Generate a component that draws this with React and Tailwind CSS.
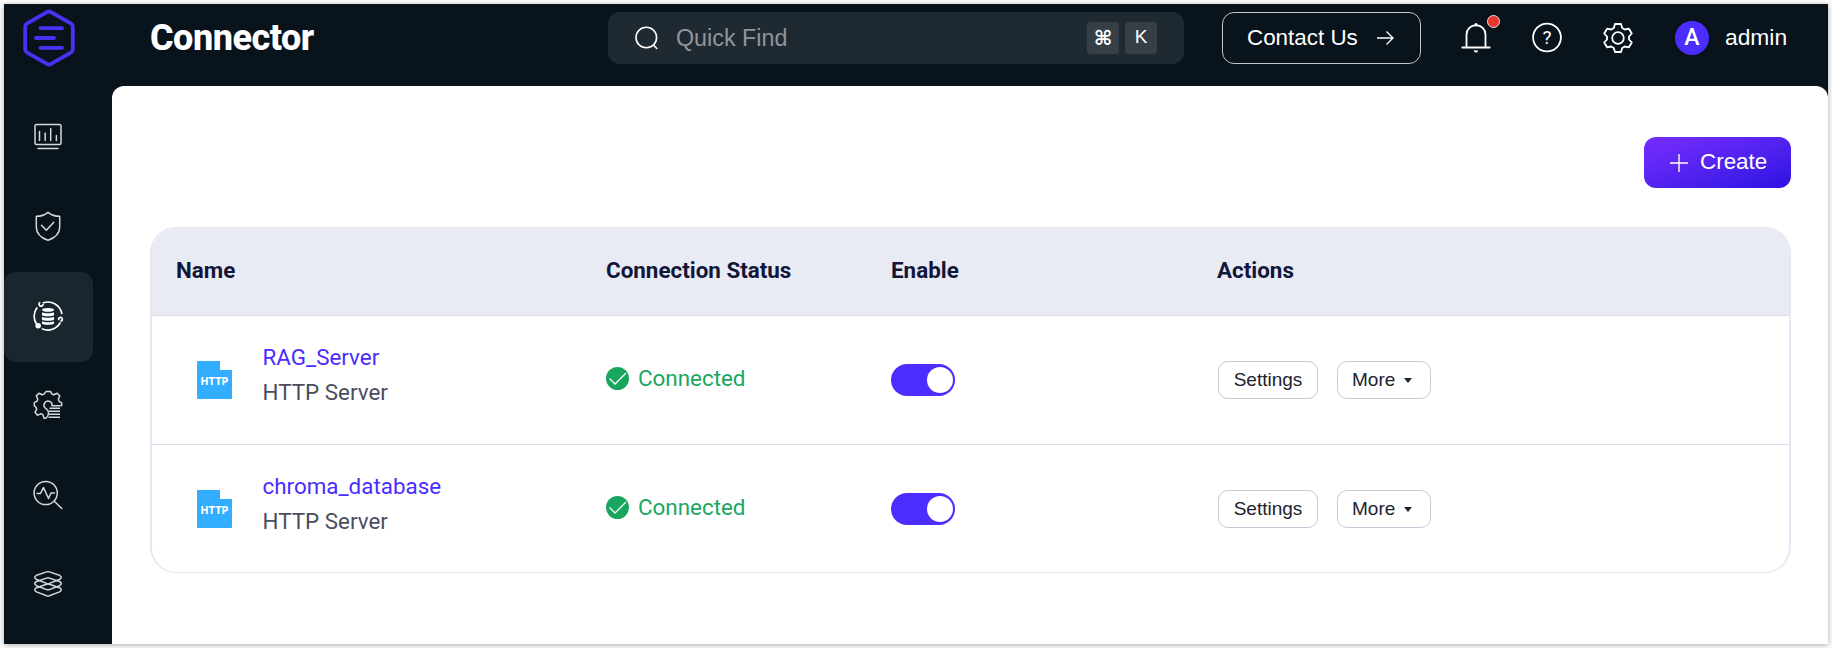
const ink = 'stroke-[#d4d9dc]';

function Logo() {
  return (
    <svg className="h-[58px] w-[52px]" viewBox="0 0 52 58" fill="none" stroke="#4a32f5" strokeWidth="3.8" strokeLinecap="round" strokeLinejoin="round">
      <path d="M24 3.100 4.200 14.300a4 4 0 0 0-2 3.400v22.600a4 4 0 0 0 2 3.400L24 54.900a4 4 0 0 0 4 0l19.800-11.200a4 4 0 0 0 2-3.400V17.700a4 4 0 0 0-2-3.400L28 3.100a4 4 0 0 0-4 0Z" />
      <path d="M17.500 19.200h21.500M13 29h18M17.500 38.800h21.500" />
    </svg>
  );
}

function MonitorIcon() {
  return (
    <svg className={`size-[30px] ${ink}`} viewBox="0 0 30 30" fill="none" strokeWidth="1.5" strokeLinecap="round">
      <rect x="2" y="2.500" width="26" height="20" rx="1.500" />
      <path d="M6.500 9.500v9M12.200 11v7.500M17.700 6.500v12M23.400 13.500v5M5 26.500h20" />
    </svg>
  );
}

function ShieldIcon() {
  return (
    <svg className={`size-[30px] ${ink}`} viewBox="0 0 30 30" fill="none" strokeWidth="1.500" strokeLinecap="round" strokeLinejoin="round">
      <path d="M15 1.300C12 3.800 8 5.300 3.300 5.300v10.700c0 6.500 5 11 11.700 13.200 6.700-2.200 11.700-6.700 11.700-13.200V5.300C22 5.300 18 3.800 15 1.300Z" />
      <path d="m8.500 14.300 4.800 5 7.500-8" />
    </svg>
  );
}

function ConnectorIcon() {
  return (
    <svg className="size-[32px]" viewBox="0 0 32 32" fill="none" stroke="#fff" strokeWidth="1.700" strokeLinecap="round">
      <path d="M11.500 2.800A14 14 0 0 1 29.800 13.500M28 23A14 14 0 0 1 10.500 29M4.500 24A14 14 0 0 1 4.800 8" />
      <path d="M7.700 2.700a2 2 0 1 0 3.300 1.800M26.700 19.500a1.800 1.800 0 1 1 2.300 1.500" />
      <circle cx="6.200" cy="25.800" r="1.900" fill="#fff" />
      <g fill="#fff" stroke="none">
        <ellipse cx="16" cy="9.800" rx="6" ry="1.900" />
        <path d="M10 12.200c2 1.400 10 1.400 12 0v3c-2 1.500-10 1.500-12 0ZM10 16.700c2 1.400 10 1.400 12 0v3c-2 1.500-10 1.500-12 0ZM10 21.200c2 1.400 10 1.400 12 0v2.500c-2 1.500-10 1.500-12 0Z" />
      </g>
    </svg>
  );
}

function GearListIcon() {
  return (
    <svg className={`size-[30px] ${ink}`} viewBox="0 0 30 30" fill="none" strokeWidth="1.500" strokeLinejoin="round">
      <path d="M13 28.200h-2l-1.200-3.600-2-.9-3.300 1.600-2.500-3 1.700-3.200-.8-2L1.300 15.700v-3l2.700-1.500.8-2-1.500-3.300L6 3.200l3.300 1.500 2-.8L13 1.400h4.500l1.300 2.500 2 .9 3.500-1.600 2.500 2.800-1.500 3.300.8 2 2.600 1.500v2.700L26.500 15.700H19a4 4 0 1 0-6 2.900c1.700 1 2.500 2 2.500 4.400 0 2.600-1 4-2.500 5.200Z" />
      <path d="M16.500 18.300H27M16 21.300h11M16 24.300h11M15.500 27.300H27" />
    </svg>
  );
}

function InspectIcon() {
  return (
    <svg className={`size-[30px] ${ink}`} viewBox="0 0 30 30" fill="none" strokeWidth="1.500" strokeLinecap="round" strokeLinejoin="round">
      <circle cx="12.700" cy="13" r="11.600" />
      <path d="M4 13.500h3.500L10.500 7.500l5 11 2.500-5.500h3.500M21.500 21.500l7.300 7" />
    </svg>
  );
}

function LayersIcon() {
  return (
    <svg className={`size-[30px] ${ink}`} viewBox="0 0 30 30" fill="none" strokeWidth="1.500" strokeLinejoin="round">
      {[8.800, 15, 21.200].map((y) => (
        <path key={y} transform={`translate(0 ${y})`} d="M13.600-5.900 3.500-2.500q-3.500 2 0 4.200l10.100 3.900q1.400.5 2.800 0L26.500 1.700q3.500-2.200 0-4.200L16.400-5.900q-1.400-.5-2.800 0Z" />
      ))}
    </svg>
  );
}

const nav = [MonitorIcon, ShieldIcon, ConnectorIcon, GearListIcon, InspectIcon, LayersIcon];

function Header() {
  return (
    <header className="flex h-[82px] shrink-0 items-start text-white">
      <div className="flex h-[68px] w-[146px] items-center pl-[19px]"><Logo /></div>
      <h1 className="w-[458px] pt-[13px] font-[Roboto] text-[36px] leading-[42px] font-extrabold tracking-[-0.5px]">Connector</h1>
      <div className="mt-2 flex h-[52px] w-[576px] items-center rounded-xl bg-[#1f2931] pr-[27px] pl-[27px]">
        <svg className="size-6" viewBox="0 0 24 24" fill="none" stroke="#fff" strokeWidth="1.600" strokeLinecap="round">
          <circle cx="11.300" cy="11.500" r="10.300" /><path d="m18.800 19.500 3 3" />
        </svg>
        <span className="ml-[17px] flex-1 text-[23.300px] text-[#90959c]">Quick Find</span>
        <kbd className="flex size-8 items-center justify-center rounded-[3px] bg-[#363f45] font-['DejaVu_Sans'] text-[20px] font-bold">⌘</kbd>
        <kbd className="ml-1.5 flex size-8 items-center justify-center rounded-[3px] bg-[#363f45] pb-0.5 font-['Liberation_Sans'] text-[19px]">K</kbd>
      </div>
      <button className="mt-2 ml-[38px] flex h-[52px] w-[199px] items-center rounded-xl border border-[#bfc5ca] pl-[24px] text-[22.400px]">
        <span className="w-[130px] text-left">Contact Us</span>
        <svg className="h-4 w-[17px]" viewBox="0 0 17 16" fill="none" stroke="#fff" strokeWidth="1.300"><path d="M0 8h16M9.500 1.500 16 8l-6.500 6.500" /></svg>
      </button>
      <div className="relative mt-[18px] ml-[39px]">
        <svg className="h-8 w-[32px]" viewBox="0 0 32 32" fill="none" stroke="#fff" strokeWidth="1.800" strokeLinecap="round">
          <path d="M2.300 25.500h27.400M6.500 25V12.700a9.500 9.500 0 0 1 19 0V25" />
          <path d="M16 2.500v.5" strokeWidth="3" />
          <path d="M14.300 28.800h3.400a1.700 1.500 0 0 1-3.400 0Z" fill="#fff" strokeWidth=".6" />
        </svg>
        <span className="absolute -top-[7px] left-[27px] size-[13px] rounded-full border border-[#f5dcda] bg-[#e8362c]" />
      </div>
      <svg className="mt-[18px] ml-[39px] size-8" viewBox="0 0 32 32" fill="none" stroke="#fff" strokeWidth="1.800">
        <circle cx="16" cy="15.500" r="13.900" />
        <text x="16" y="22" textAnchor="middle" fill="#fff" stroke="none" className="font-[Roboto] text-[19px]">?</text>
      </svg>
      <svg className="mt-[18px] ml-[38.500px] size-8" viewBox="0 0 32 32" fill="none" stroke="#fff" strokeWidth="1.800" strokeLinejoin="round">
        <path d="M13 2h6l1.200 4 2.600 1.500 4.100-.8 2.900 4.800-2.800 3v3l2.800 3-2.900 4.800-4.100-.8-2.600 1.500-1.200 4h-6l-1.200-4-2.600-1.500-4.100.8-2.900-4.800 2.800-3v-3l-2.800-3 2.900-4.800 4.100.8 2.600-1.500Z" />
        <circle cx="16" cy="16" r="5.800" />
      </svg>
      <span className="mt-[17px] ml-[41.500px] flex size-[34px] items-center justify-center rounded-full bg-[#4b2dff] font-[Roboto] text-[23px] font-medium">A</span>
      <span className="mt-[16px] ml-[16px] text-[22.800px] leading-[34px]">admin</span>
    </header>
  );
}

function HttpIcon() {
  return (
    <svg className="h-[38px] w-[35px]" viewBox="0 0 35 38">
      <path d="M1 0h22v9h12v28a1 1 0 0 1-1 1H1a1 1 0 0 1-1-1V1a1 1 0 0 1 1-1Z" fill="#33adff" />
      <path d="m24 .5 9 8" stroke="#eef1f5" strokeWidth=".6" />
      <text x="17.500" y="24" textAnchor="middle" textLength="27.500" lengthAdjust="spacingAndGlyphs" fill="#fff" className="font-[Inter] text-[11px] font-extrabold">HTTP</text>
    </svg>
  );
}

const grid = 'grid grid-cols-[430px_285px_326px_1fr] items-center';
const action = "flex h-[38px] items-center rounded-[10px] border border-[#c5c9d8] text-[19px] text-[#20232f]";

function Row({ name, last }) {
  return (
    <div className={`${grid} ${last ? 'h-[128px]' : 'h-[129px] border-b border-[#dadcec]'} pl-6`}>
      <div className="flex items-center pl-[21px]">
        <HttpIcon />
        <div className="-mt-[11px] ml-[30.500px] font-[Roboto] text-[22.400px] leading-[35px]">
          <div className="text-[#4a2dff]">{name}</div>
          <div className="text-[#4a4d5e]">HTTP Server</div>
        </div>
      </div>
      <div className="-mt-[3px] flex items-center font-[Roboto] text-[22.400px] text-[#1aa75f]">
        <svg className="size-[23px]" viewBox="0 0 23 23" fill="none"><circle cx="11.500" cy="11.500" r="11.500" fill="#18a55d" /><path d="m3.500 11.500 5.500 5.500L20 6" stroke="#fff" strokeWidth="1.300" /></svg>
        <span className="ml-[9px]">Connected</span>
      </div>
      <div><div className="flex h-8 w-16 items-center justify-end rounded-full bg-[#4b2dff] pr-[2px]"><span className="size-[26px] rounded-full bg-white" /></div></div>
      <div className="flex gap-[19px] pl-px">
        <button className={`${action} w-[100px] justify-center`}>Settings</button>
        <button className={`${action} w-[94px] pl-[14px]`}>
          More
          <svg className="ml-[9px] h-[5px] w-2" viewBox="0 0 8 5"><path d="M0 0h8L4 5Z" fill="#20232f" /></svg>
        </button>
      </div>
    </div>
  );
}

export default function App() {
  return (
    <div className="h-[648px] w-[1832px] overflow-hidden bg-[#fafafa] pt-1 pl-1 font-['Liberation_Sans',sans-serif]">
      <div className="flex h-[640px] w-[1824px] flex-col bg-[#08131c] shadow-[0_1px_5px_rgba(0,0,0,0.3)]">
        <Header />
        <div className="flex flex-1">
          <nav className="flex w-[108px] flex-col pt-[7px]">
            {nav.map((Icon, i) => (
              <a key={i} className={`flex h-[89.500px] w-[89px] items-center justify-center pr-px pb-0.5 ${i === 2 ? 'rounded-xl bg-[#1a262e]' : ''}`}>
                <Icon />
              </a>
            ))}
          </nav>
          <main className="flex-1 rounded-t-xl bg-white pr-[37px] pl-[38px]">
            <div className="flex justify-end pt-[51px]">
              <button className="flex h-[51px] w-[147px] items-center rounded-xl bg-linear-to-br from-[#782cff] to-[#2c10e2] pl-[26px] text-[22.400px] text-white">
                <svg className="size-[18px]" viewBox="0 0 18 18" stroke="#fff" strokeWidth="1.400"><path d="M9 0v18M0 9h18" /></svg>
                <span className="ml-[12px] pb-px">Create</span>
              </button>
            </div>
            <section className="mt-[39px] h-[346px] overflow-hidden rounded-[26px] border border-x-2 border-[#e7e6f6]">
              <div className={`${grid} h-[88px] border-b border-[#dadcec] bg-[#e8ebf4] pb-0.5 pl-6 font-[Roboto] text-[22.400px] font-bold text-[#12163a]`}>
                <div>Name</div><div>Connection Status</div><div>Enable</div><div>Actions</div>
              </div>
              <Row name="RAG_Server" />
              <Row name="chroma_database" last />
            </section>
          </main>
        </div>
      </div>
    </div>
  );
}
